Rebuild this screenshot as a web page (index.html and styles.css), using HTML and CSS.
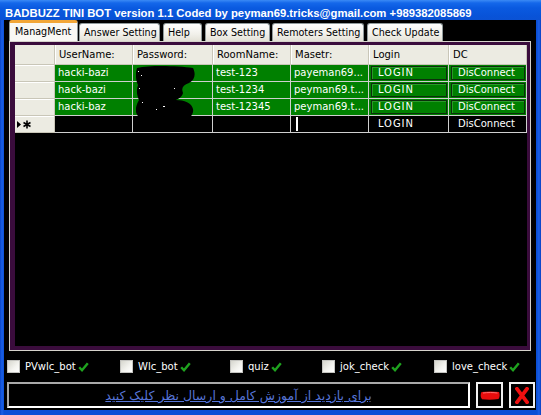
FILE: index.html
```html
<!DOCTYPE html>
<html>
<head>
<meta charset="utf-8">
<link rel="stylesheet" href="styles.css">
</head>
<body>
<div class="window">
  <div class="titlebar">BADBUZZ TINI BOT version 1.1 Coded by peyman69.tricks@gmail.com +989382085869</div>
  <div class="frame">
    <div class="client">
      <div class="tabs">
        <div class="tab tab-active">ManagMent</div>
        <div class="tab">Answer Setting</div>
        <div class="tab">Help</div>
        <div class="tab">Box Setting</div>
        <div class="tab">Remoters Setting</div>
        <div class="tab">Check Update</div>
      </div>
      <div class="panel">
        <div class="panel-inner">
          <div class="grid">
            <div class="hcell corner"></div>
            <div class="hcell">UserName:</div>
            <div class="hcell">Password:</div>
            <div class="hcell">RoomName:</div>
            <div class="hcell">Masetr:</div>
            <div class="hcell">Login</div>
            <div class="hcell">DC</div>

            <div class="rhead"></div>
            <div class="cell">hacki-bazi</div>
            <div class="cell"></div>
            <div class="cell">test-123</div>
            <div class="cell">payeman69...</div>
            <div class="cell btn-cell"><span class="btn login">LOGIN</span></div>
            <div class="cell btn-cell"><span class="btn">DisConnect</span></div>

            <div class="rhead"></div>
            <div class="cell">hack-bazi</div>
            <div class="cell"></div>
            <div class="cell">test-1234</div>
            <div class="cell">peyman69.t...</div>
            <div class="cell btn-cell"><span class="btn login">LOGIN</span></div>
            <div class="cell btn-cell"><span class="btn">DisConnect</span></div>

            <div class="rhead"></div>
            <div class="cell">hacki-baz</div>
            <div class="cell"></div>
            <div class="cell">test-12345</div>
            <div class="cell">peyman69.t...</div>
            <div class="cell btn-cell"><span class="btn login">LOGIN</span></div>
            <div class="cell btn-cell"><span class="btn">DisConnect</span></div>

            <div class="rhead newrow-head">
              <svg width="16" height="9" viewBox="0 0 16 9"><path d="M1 1 L5 4.5 L1 8 Z" fill="#000"/><path d="M11 0.5 V8.5 M7.5 2.5 L14.5 6.5 M7.5 6.5 L14.5 2.5" stroke="#000" stroke-width="1.6"/></svg>
            </div>
            <div class="cell newcell"></div>
            <div class="cell newcell"></div>
            <div class="cell newcell"></div>
            <div class="cell newcell"><span class="caret"></span></div>
            <div class="cell newcell"><span class="plain login">LOGIN</span></div>
            <div class="cell newcell"><span class="plain">DisConnect</span></div>

            <svg class="scribble" width="62" height="60" viewBox="0 0 62 60">
              <path d="M1 2 C15 -1 42 0 57 2 C60 8 59 14 53 17 C47 19 45 22 47 27 C46 31 42 33 40 34 C48 34 56 37 57 43 C58 48 54 53 46 56 C35 59 21 59 15 56 C6 54 1 51 0 46 C-1 41 2 36 3 34 C1 30 0 24 2 19 C0 15 -1 8 1 2 Z" fill="#000"/>
              <rect x="2" y="5" width="1" height="1" fill="#fff"/>
              <rect x="5" y="9" width="1" height="1" fill="#fff"/>
              <rect x="3" y="22" width="1" height="1" fill="#fff"/>
              <rect x="6" y="36" width="1" height="1" fill="#fff"/>
              <rect x="38" y="22" width="1" height="1" fill="#fff"/>
              <rect x="20" y="43" width="1" height="1" fill="#fff"/>
              <rect x="27" y="40" width="2" height="1" fill="#fff"/>
            </svg>
          </div>
        </div>
      </div>
      <div class="checks">
        <label class="chk"><span class="box"></span><span class="lbl">PVwlc_bot</span><svg class="tick" width="11" height="10" viewBox="0 0 11 10"><path d="M1.2 5.2 L4 8.2 L9.8 1.2" fill="none" stroke="#1fa31f" stroke-width="2.4"/></svg></label>
        <label class="chk"><span class="box"></span><span class="lbl">Wlc_bot</span><svg class="tick" width="11" height="10" viewBox="0 0 11 10"><path d="M1.2 5.2 L4 8.2 L9.8 1.2" fill="none" stroke="#1fa31f" stroke-width="2.4"/></svg></label>
        <label class="chk"><span class="box"></span><span class="lbl">quiz</span><svg class="tick" width="11" height="10" viewBox="0 0 11 10"><path d="M1.2 5.2 L4 8.2 L9.8 1.2" fill="none" stroke="#1fa31f" stroke-width="2.4"/></svg></label>
        <label class="chk"><span class="box"></span><span class="lbl">jok_check</span><svg class="tick" width="11" height="10" viewBox="0 0 11 10"><path d="M1.2 5.2 L4 8.2 L9.8 1.2" fill="none" stroke="#1fa31f" stroke-width="2.4"/></svg></label>
        <label class="chk"><span class="box"></span><span class="lbl">love_check</span><svg class="tick" width="11" height="10" viewBox="0 0 11 10"><path d="M1.2 5.2 L4 8.2 L9.8 1.2" fill="none" stroke="#1fa31f" stroke-width="2.4"/></svg></label>
      </div>
      <div class="bottom">
        <div class="linkbox"><a class="link" dir="rtl">برای بازدید از آموزش کامل و ارسال نظر کلیک کنید</a></div>
        <div class="wbtn wbtn-min">
          <svg width="20" height="9" viewBox="0 0 20 9"><path d="M1.5 1 C7 0.3 14 0.3 19 1 C20 3 19.8 6.5 18.5 8 C13 8.8 7 8.8 2 8.2 C0.3 6.5 0.3 2.8 1.5 1 Z" fill="#e80c0c"/><path d="M3 2 C8 1.4 13 1.4 17.5 2" stroke="#ff7070" stroke-width="1" fill="none"/></svg>
        </div>
        <div class="wbtn wbtn-close">
          <svg width="14" height="17" viewBox="0 0 14 17"><path d="M2 1.8 L12 15.2 M12 1.8 L2 15.2" stroke="#f01010" stroke-width="3.8" stroke-linecap="square"/></svg>
        </div>
      </div>
    </div>
  </div>
</div>
</body>
</html>
```

FILE: styles.css
```css
* { box-sizing: border-box; }
html, body {
  margin: 0;
  padding: 0;
  background: #0a4fd6;
}
.window {
  width: 541px;
  height: 415px;
  display: flex;
  flex-direction: column;
  background: #0b52da;
}
.titlebar {
  height: 20px;
  padding: 6px 0 0 5px;
  line-height: 14px;
  font-family: "Liberation Sans", Arial, sans-serif;
  font-weight: bold;
  font-size: 11.3px;
  color: #fff;
  white-space: nowrap;
  background: linear-gradient(to bottom, #3b8af5 0px, #1467ea 3px, #0a5ae0 8px, #0853d8 16px, #0a52d4 20px);
}
.frame {
  flex: 1;
  display: flex;
  padding: 0 5px 5px 4px;
  background: linear-gradient(to right, #0a45c8 0px, #1b60e6 2px, #0b4fd6 4px, #0b4fd6 537px, #1b60e6 539px, #0a3fc0 541px);
}
.client {
  flex: 1;
  background: #000;
  display: flex;
  flex-direction: column;
  font-family: "DejaVu Sans", Verdana, sans-serif;
  font-size: 10px;
}

/* tabs */
.tabs {
  height: 21px;
  display: flex;
  align-items: flex-end;
  padding-left: 5px;
}
.tab {
  height: 18px;
  padding: 1px 0 0 4px;
  line-height: 16px;
  color: #000;
  white-space: nowrap;
  overflow: hidden;
  background: linear-gradient(to bottom, #ffffff, #f1f0ea 60%, #e3e1d6);
  border: 1px solid #919b9c;
  border-bottom: none;
  border-radius: 3px 3px 0 0;
  font-size: 9.6px;
}
.tab-active {
  height: 21px;
  padding: 0 0 0 5px;
  line-height: 17px;
  background: #f9f8f4;
  border-top: 3px solid #f2a637;
  border-color: #f2a637 #919b9c #919b9c #919b9c;
  z-index: 1;
}
.tab:nth-child(1) { width: 69px; }
.tab:nth-child(2) { width: 81px; margin-left: 1px; }
.tab:nth-child(3) { width: 39px; margin-left: 3px; }
.tab:nth-child(4) { width: 65px; margin-left: 3px; }
.tab:nth-child(5) { width: 92px; margin-left: 2px; }
.tab:nth-child(6) { width: 76px; margin-left: 3px; }

/* panel */
.panel {
  margin-left: 5px;
  width: 522px;
  height: 310px;
  border: 1px solid #d6d3cc;
}
.panel-inner {
  height: 100%;
  border-style: solid;
  border-color: #3a0c3c;
  border-width: 3px 3px 4px 5px;
  background: #000;
}
.grid {
  position: relative;
  display: grid;
  grid-template-columns: 40px 78px 80px 78px 78px 80px 78px;
  grid-template-rows: 20px 17px 17px 17px 17px;
  color: #fff;
}
.hcell {
  background: #ecebe2;
  color: #000;
  padding-left: 4px;
  line-height: 19px;
  border-right: 1px solid #c9c6b8;
  border-bottom: 1px solid #c9c6b8;
  box-shadow: inset 1px 0 0 #ffffff;
  white-space: nowrap;
  overflow: hidden;
}
.corner { box-shadow: none; }
.rhead {
  background: #ecebe2;
  border-right: 1px solid #c9c6b8;
  border-bottom: 1px solid #c9c6b8;
  box-shadow: inset 0 1px 0 #ffffff;
}
.newrow-head {
  display: flex;
  align-items: center;
  padding-left: 1px;
}
.cell {
  background: #008000;
  border-right: 1px solid #cfcfcf;
  border-bottom: 1px solid #cfcfcf;
  padding-left: 3px;
  line-height: 16px;
  white-space: nowrap;
  overflow: hidden;
}
.btn-cell {
  padding: 1px 1px 0 2px;
}
.btn {
  display: block;
  height: 14px;
  line-height: 12px;
  padding-left: 6px;
  border: 1px solid #0c2e0c;
  box-shadow: inset 1px 1px 0 #2a9a2a;
}
.newcell { background: #000; }
.plain { padding-left: 6px; }
.login { letter-spacing: 0.9px; }
.caret {
  display: inline-block;
  width: 2px;
  height: 14px;
  margin: 1px 0 0 2px;
  background: #fff;
  vertical-align: top;
}
.scribble {
  position: absolute;
  left: 121px;
  top: 21px;
}

/* checkboxes */
.checks {
  height: 31px;
  display: flex;
  align-items: center;
  padding-left: 3px;
  color: #fff;
}
.chk {
  display: flex;
  align-items: center;
}
.chk:nth-child(1) { width: 113px; }
.chk:nth-child(2) { width: 110px; }
.chk:nth-child(3) { width: 92px; }
.chk:nth-child(4) { width: 112px; }
.box {
  width: 13px;
  height: 13px;
  border: 1px solid #c4c4c0;
  background: linear-gradient(135deg, #d6d6ce, #f4f4f0 60%, #ffffff);
  margin-right: 5px;
}
.lbl { line-height: 13px; }
.tick { margin-left: 2px; }

/* bottom */
.bottom {
  height: 26px;
  display: flex;
  padding-left: 3px;
}
.linkbox {
  width: 463px;
  height: 26px;
  border-style: solid;
  border-width: 2px;
  border-color: #a9a9a9 #ffffff #ffffff #a9a9a9;
  display: flex;
  align-items: center;
  justify-content: center;
  padding-top: 1px;
}
.link {
  color: #5674d6;
  text-decoration: underline;
  font-family: "DejaVu Sans", sans-serif;
  font-size: 12.5px;
  white-space: nowrap;
}
.wbtn {
  height: 26px;
  border: 2px solid #f2f2f2;
  display: flex;
  align-items: center;
  justify-content: center;
}
.wbtn-min { width: 27px; margin-left: 6px; }
.wbtn-close { width: 26px; margin-left: 6px; }
```
